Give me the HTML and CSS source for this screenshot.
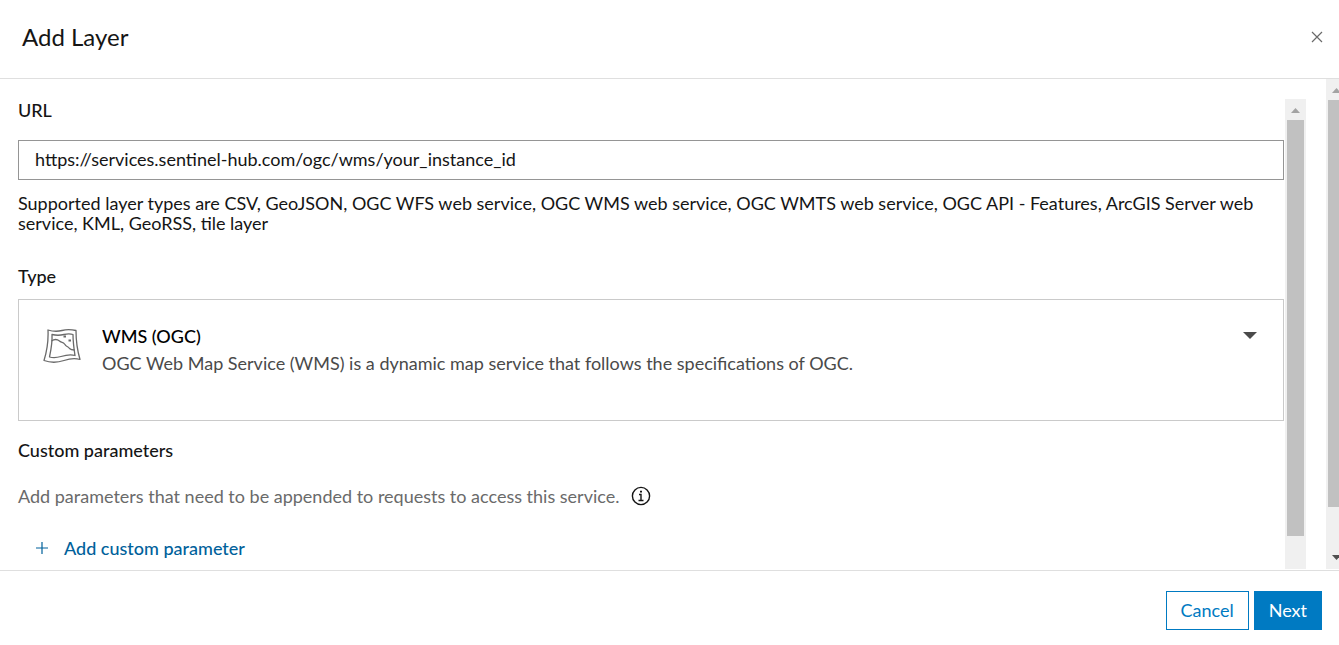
FILE: index.html
```html
<!DOCTYPE html>
<html lang="en">
<head>
    <meta charset="UTF-8">
    <meta name="viewport" content="width=device-width, initial-scale=1.0">
    <title>Add Layer</title>
    <link rel="stylesheet" href="styles.css">
</head>
<body>
    <header class="header">
        <h1>Add Layer</h1>
        <button class="close" type="button" aria-label="Close">
            <svg width="12" height="12" viewBox="0 0 12 12"><path d="M1 1l10 10M11 1L1 11" fill="none" stroke="#6a6a6a" stroke-width="1.2"/></svg>
        </button>
    </header>

    <main class="content">
        <form class="form" id="layerForm">
            <label class="label" for="url">URL</label>
            <input class="url" id="url" type="text" value="https://services.sentinel-hub.com/ogc/wms/your_instance_id">
            <p class="hint">Supported layer types are CSV, GeoJSON, OGC WFS web service, OGC WMS web service, OGC WMTS web service, OGC API - Features, ArcGIS Server web service, KML, GeoRSS, tile layer</p>

            <label class="label" for="type">Type</label>
            <div class="type-card">
                <svg class="type-icon" width="38" height="36" viewBox="0 0 38 36" fill="none" stroke="#6a6a6a" stroke-width="1.3" stroke-linejoin="round">
                    <path d="M5 1C10 2.5 15 2.5 19 1.5S28 .5 33 1.5C33 12 34.5 22 37 30.500C32 29 27 29.5 21 31.5S8 34 1 31.500C4 22 5.5 12 5 1Z"/>
                    <path d="M9 5.5C13 6.5 17 6.500 21 5.500S27 4.500 30 5.500C30 13 31 20 32 26.500C27 25 23 26 18 27.500S10 29 6.500 28C8 21 9.500 14 9 5.500Z"/>
                    <path d="M8.500 12C12 9.500 14 10 16.500 12C18 13.500 20 12.500 22 15.500C23 18 25 17 26.500 19.500C28 21 29.500 21 31.500 21"/>
                    <path d="M20.500 7.500h2.500M25.500 11.500h2.500" stroke-width="2"/>
                </svg>
                <div class="type-text">
                    <select class="type" id="type" aria-describedby="typeInfo">
                        <option>WMS (OGC)</option>
                    </select>
                    <p class="type-info" id="typeInfo">OGC Web Map Service (WMS) is a dynamic map service that follows the specifications of OGC.</p>
                </div>
                <svg class="caret" width="14" height="7" viewBox="0 0 14 7"><path d="M0 0h14L7 7z" fill="#4a4a4a"/></svg>
            </div>

            <h2 class="label">Custom parameters</h2>
            <div class="params">
                <p>Add parameters that need to be appended to requests to access this service.</p>
                <svg width="20" height="20" viewBox="0 0 20 20" fill="none" stroke="#151515" stroke-width="1.4">
                    <circle cx="10" cy="10" r="8.6"/>
                    <path d="M8 8.5h2v6M7.5 14.5h5"/>
                    <path d="M9 5.7h2" stroke-width="1.8"/>
                </svg>
            </div>
            <button class="add" type="button">
                <svg width="12" height="12" viewBox="0 0 12 12"><path d="M6 0v12M0 6h12" fill="none" stroke="#00619b" stroke-width="1.2"/></svg>
                Add custom parameter
            </button>
        </form>

        <div class="scrollbar inner" aria-hidden="true">
            <svg class="arrow" width="21" height="21" viewBox="0 0 21 21"><path d="M6 14h9l-4.5-5z" fill="#a3a3a3"/></svg>
            <div class="thumb"></div>
        </div>
        <div class="scrollbar outer" aria-hidden="true">
            <svg class="arrow" width="21" height="21" viewBox="0 0 21 21"><path d="M6 14h9l-4.5-5z" fill="#a3a3a3"/></svg>
            <div class="thumb"></div>
            <svg class="arrow" width="21" height="21" viewBox="0 0 21 21"><path d="M6 7h9l-4.5 5z" fill="#505050"/></svg>
        </div>
    </main>

    <footer class="footer">
        <button class="btn" type="button">Cancel</button>
        <button class="btn primary" type="submit" form="layerForm">Next</button>
    </footer>
</body>
</html>
```

FILE: styles.css
```css
* {
    box-sizing: border-box;
}

body {
    font-family: Lato, sans-serif;
    font-size: 18px;
    line-height: 20px;
    color: #151515;
    display: flex;
    flex-direction: column;
    height: 100vh;
    margin: 0;
    background-color: white;
}

h1, h2, p {
    margin: 0;
}

button, input, select {
    font: inherit;
    color: inherit;
}

button {
    cursor: pointer;
}

svg {
    display: block;
    flex: none;
}

.header {
    display: flex;
    justify-content: space-between;
    align-items: center;
    padding: 22px 16px 26px 22px;
    border-bottom: 1px solid #dfdfdf;
}

.header h1 {
    font-size: 24px;
    font-weight: 400;
    line-height: 30px;
}

.close {
    padding: 0;
    border: none;
    background: none;
}

.content {
    flex: 1;
    display: flex;
    min-height: 0;
    overflow: hidden;
}

.form {
    flex: 1;
    padding: 21px 1px 0 18px;
}

.label {
    display: block;
    font-size: 18px;
    font-weight: 500;
}

.url {
    display: block;
    width: 100%;
    height: 40px;
    margin: 20px 0 13px;
    padding: 0 16px 2px;
    border: 1px solid #959595;
}

.hint {
    margin-bottom: 33px;
}

.type-card {
    display: flex;
    height: 122px;
    margin: 13px 0 19px;
    padding: 26px 26px 0 24px;
    border: 1px solid #cacaca;
}

.type-icon {
    margin: 3px 21px 0 0;
}

.type-text {
    flex: 1;
}

.type {
    display: block;
    width: 100%;
    height: 20px;
    padding: 0;
    border: none;
    background: none;
    appearance: none;
    font-weight: 500;
    color: #000;
}

.type-info {
    margin-top: 7px;
    color: #4a4a4a;
}

.caret {
    margin-top: 6px;
}

.params {
    display: flex;
    align-items: center;
    gap: 12px;
    margin: 26px 0 32px;
    color: #6a6a6a;
}

.add {
    display: flex;
    align-items: center;
    gap: 16px;
    padding: 0 18px;
    border: none;
    background: none;
    font-weight: 500;
    color: #00619b;
}

.scrollbar {
    display: flex;
    flex-direction: column;
    flex: none;
    background-color: #f0f0f0;
}

.thumb {
    width: 17px;
    margin-left: 2px;
    background-color: #c1c1c1;
}

.inner {
    width: 21px;
    margin: 20px 20px 1px 0;
}

.inner .thumb {
    height: 88.5%;
}

.outer {
    width: 13px;
    margin-bottom: 1px;
    overflow: hidden;
}

.outer .thumb {
    height: 83%;
}

.outer .arrow:last-child {
    margin-top: auto;
}

.footer {
    display: flex;
    justify-content: flex-end;
    gap: 5px;
    padding: 20px 17px 15px;
    border-top: 1px solid #dfdfdf;
}

.btn {
    padding: 8px 14px 9px;
    border: 1px solid #007ac2;
    background-color: white;
    color: #007ac2;
}

.btn.primary {
    background-color: #007ac2;
    color: white;
}
```
